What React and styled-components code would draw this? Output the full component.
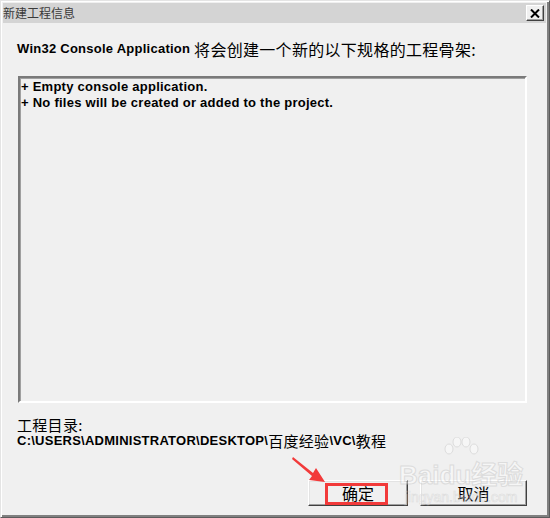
import React from 'react';
import styled, { createGlobalStyle } from 'styled-components';

const GlobalStyle = createGlobalStyle`
  html, body {
    margin: 0;
    padding: 0;
    background: #f0f0f0;
  }
`;

const Window = styled.div`
  position: relative;
  box-sizing: border-box;
  width: 550px;
  height: 518px;
  background: #f0f0f0;
  border-top: 1px solid #e4e4e4;
  border-left: 1px solid #e4e4e4;
  border-right: 1px solid #5c5c5c;
  border-bottom: 1px solid #5c5c5c;
  box-shadow: inset 1px 1px 0 #ffffff, inset -2px -2px 0 #808080;
  padding: 2px 3px 3px 2px;
  display: flex;
  flex-direction: column;
  font-family: "Liberation Sans", Arial, "Noto Sans CJK SC", sans-serif;
  color: #000;
  overflow: hidden;
`;

const TitleBar = styled.div`
  height: 20px;
  background: #d4d4d4;
  display: flex;
  align-items: center;
  justify-content: space-between;
  padding-right: 2px;
`;

const Title = styled.span`
  font-family: "Noto Sans CJK SC", sans-serif;
  font-size: 12px;
  color: #3a3a3a;
  line-height: 20px;
`;

const CloseButton = styled.div`
  box-sizing: border-box;
  width: 18px;
  height: 16px;
  background: #f0f0f0;
  border-top: 1px solid #ffffff;
  border-left: 1px solid #ffffff;
  border-right: 1px solid #404040;
  border-bottom: 1px solid #404040;
  box-shadow: inset -1px -1px 0 #a0a0a0;
  display: flex;
  align-items: center;
  justify-content: center;
`;

const Body = styled.div`
  flex: 1;
  display: flex;
  flex-direction: column;
  padding: 18px 19px 0 14px;
`;

const TextLine = styled.div`
  height: 16px;
  margin-top: ${p => p.$top || 0}px;
  font-size: 13px;
  font-weight: ${p => (p.$bold ? 'bold' : 'normal')};
  letter-spacing: ${p => (p.$bold ? '0.25px' : '0')};
  line-height: 16px;
  white-space: nowrap;
`;

const Cjk = styled.span`
  font-family: "Noto Sans CJK SC", sans-serif;
  font-weight: normal;
  font-size: ${p => p.$size || 15}px;
  letter-spacing: 0.3px;
  line-height: 16px;
  vertical-align: top;
`;

const ListBox = styled.div`
  box-sizing: border-box;
  margin-top: 19px;
  margin-left: 1px;
  height: 327px;
  border-top: 2px solid #7a7a7a;
  border-left: 2px solid #7a7a7a;
  border-right: 2px solid #ffffff;
  border-bottom: 2px solid #ffffff;
  box-shadow: inset 1px 1px 0 #a0a0a0;
  padding: 1px 0 0 1px;
`;

const ButtonRow = styled.div`
  margin-top: 31px;
  display: flex;
  justify-content: flex-end;
  gap: 12px;
`;

const Button = styled.div`
  position: relative;
  box-sizing: border-box;
  width: ${p => p.$w || 100}px;
  height: 26px;
  background: #f0f0f0;
  border-top: 1px solid #ffffff;
  border-left: 1px solid #ffffff;
  border-right: 1px solid #404040;
  border-bottom: 1px solid #404040;
  box-shadow: inset -1px -1px 0 #a0a0a0, inset 1px 1px 0 #e3e3e3;
  display: flex;
  align-items: center;
  justify-content: center;
  font-family: "Noto Sans CJK SC", sans-serif;
  font-size: 16px;
`;

const Highlight = styled.div`
  position: absolute;
  left: 16px;
  top: 2px;
  width: 63px;
  height: 22px;
  box-sizing: border-box;
  border: 3px solid #f23a3a;
`;

const Arrow = styled.svg`
  position: absolute;
  left: 288px;
  top: 454px;
`;

const Watermark = styled.div`
  position: absolute;
  left: 398px;
  top: 436px;
  display: flex;
  flex-direction: column;
  align-items: center;
  pointer-events: none;
  opacity: 0.45;
  white-space: nowrap;
`;

const WatermarkLogo = styled.div`
  font-family: "Liberation Sans", Arial, "Noto Sans CJK SC", sans-serif;
  font-size: 26px;
  font-weight: bold;
  color: #ffffff;
  -webkit-text-stroke: 1px #c4c4c4;
  line-height: 28px;
  margin-top: 2px;
`;

const WatermarkSite = styled.div`
  font-family: "Liberation Sans", Arial, sans-serif;
  font-size: 14px;
  color: #ffffff;
  -webkit-text-stroke: 0.6px #c4c4c4;
  line-height: 16px;
`;

export default function App() {
  return (
    <>
      <GlobalStyle />
      <Window>
        <TitleBar>
          <Title>新建工程信息</Title>
          <CloseButton>
            <svg width="10" height="9" viewBox="0 0 10 9">
              <path d="M1 0.5 L9 8.5 M9 0.5 L1 8.5" stroke="#000" strokeWidth="2" />
            </svg>
          </CloseButton>
        </TitleBar>
        <Body>
          <TextLine $bold>
            Win32 Console Application <Cjk $size={16}>将会创建一个新的以下规格的工程骨架:</Cjk>
          </TextLine>
          <ListBox>
            <TextLine $bold>+ Empty console application.</TextLine>
            <TextLine $bold>+ No files will be created or added to the project.</TextLine>
          </ListBox>
          <TextLine $top={14}>
            <Cjk $size={15}>工程目录:</Cjk>
          </TextLine>
          <TextLine $bold>
            C:\USERS\ADMINISTRATOR\DESKTOP\<Cjk $size={15}>百度经验</Cjk>\VC\<Cjk $size={15}>教程</Cjk>
          </TextLine>
          <ButtonRow>
            <Button $w={100}>
              确定
              <Highlight />
            </Button>
            <Button $w={107}>取消</Button>
          </ButtonRow>
        </Body>
        <Watermark>
          <svg width="40" height="22" viewBox="0 0 40 22">
            <g fill="#ffffff" stroke="#c4c4c4" strokeWidth="1">
              <ellipse cx="8" cy="12" rx="4" ry="5" />
              <ellipse cx="16" cy="5" rx="4" ry="5" />
              <ellipse cx="25" cy="5" rx="4" ry="5" />
              <ellipse cx="33" cy="12" rx="4" ry="5" />
            </g>
          </svg>
          <WatermarkLogo>Baidu经验</WatermarkLogo>
          <WatermarkSite>jingyan.baidu.com</WatermarkSite>
        </Watermark>
        <Arrow width="40" height="32" viewBox="0 0 40 32">
          <polygon points="4,2 24,18 27,13 36,27 20,25 23,21 3,4" fill="#f23a3a" />
        </Arrow>
      </Window>
    </>
  );
}
